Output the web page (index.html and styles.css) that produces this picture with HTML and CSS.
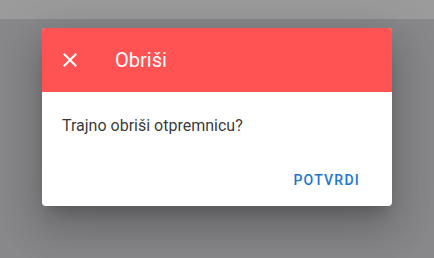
FILE: index.html
```html
<!DOCTYPE html>
<html lang="hr">
<head>
    <meta charset="UTF-8">
    <meta name="viewport" content="width=device-width, initial-scale=1.0">
    <title>Obriši</title>
    <link rel="stylesheet" href="styles.css">
</head>
<body>
    <div class="app-bar"></div>

    <!-- Dijalog za brisanje -->
    <div class="overlay">
        <div class="dialog">
            <div class="dialog-header">
                <button class="icon-btn" aria-label="Zatvori">
                    <svg width="24" height="24" viewBox="0 0 24 24">
                        <path fill="#fff" d="M19 6.41 17.59 5 12 10.59 6.41 5 5 6.41 10.59 12 5 17.59 6.41 19 12 13.41 17.59 19 19 17.59 13.41 12z"/>
                    </svg>
                </button>
                <span class="dialog-title">Obriši</span>
            </div>
            <div class="dialog-content">Trajno obriši otpremnicu?</div>
            <div class="dialog-actions">
                <button class="text-btn">Potvrdi</button>
            </div>
        </div>
    </div>
</body>
</html>
```

FILE: styles.css
```css
* {
    margin: 0;
    padding: 0;
    box-sizing: border-box;
}

body {
    font-family: Roboto, "Noto Sans", sans-serif;
    background: #88888b;
    width: 434px;
    height: 258px;
    overflow: hidden;
}

.app-bar {
    height: 20px;
    background: #9b9b9b;
    border-bottom: 1px solid #8a8a8c;
}

.overlay {
    padding: 8px 42px 0;
}

.dialog {
    width: 350px;
    background: white;
    border-radius: 4px;
    overflow: hidden;
    box-shadow: 0 11px 15px -7px rgba(0,0,0,0.2), 0 24px 38px 3px rgba(0,0,0,0.14), 0 9px 46px 8px rgba(0,0,0,0.12);
}

.dialog-header {
    height: 64px;
    background: #ff5252;
    display: flex;
    align-items: center;
    padding-left: 16px;
}

.icon-btn {
    width: 24px;
    height: 24px;
    background: none;
    border: none;
    display: flex;
    margin-right: 33px;
}

.dialog-title {
    color: white;
    font-size: 20px;
    font-weight: 400;
}

.dialog-content {
    padding: 22px 20px 16px;
    font-size: 16px;
    line-height: 24px;
    color: rgba(0,0,0,0.8);
}

.dialog-actions {
    display: flex;
    justify-content: flex-end;
    padding: 8px 24px 8px 8px;
}

.text-btn {
    height: 36px;
    padding: 0 8px;
    background: none;
    border: none;
    font-family: Roboto, sans-serif;
    font-size: 14px;
    font-weight: 500;
    letter-spacing: 1.25px;
    text-transform: uppercase;
    color: #1976d2;
}
```
